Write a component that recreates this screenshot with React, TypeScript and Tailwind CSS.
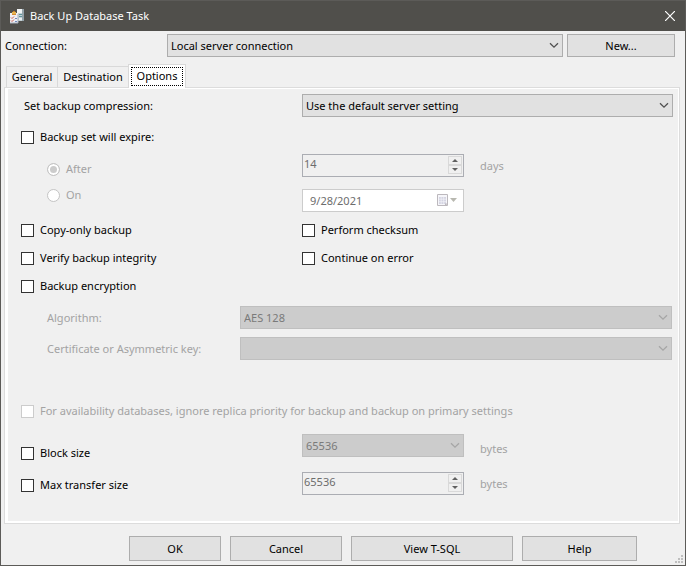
import { useId, type ReactNode } from 'react';

function Chevron({ className }: { className: string }) {
  return (
    <svg
      className={`pointer-events-none absolute right-1 top-2 ${className}`}
      width="10"
      height="7"
      viewBox="0 0 10 7"
      fill="none"
      stroke="currentColor"
      strokeWidth="1.3"
    >
      <path d="M1 1.2 5 5.2 9 1.2" />
    </svg>
  );
}

type ComboProps = { id?: string; label?: string; value: string; disabled?: boolean; className: string };

function Combo({ id, label, value, disabled, className }: ComboProps) {
  return (
    <div className={`relative h-[23px] ${className}`}>
      <select
        id={id}
        aria-label={label}
        disabled={disabled}
        className="block h-full w-full appearance-none border border-[#adadad] bg-[#e1e1e1] px-[3px] text-black opacity-100 disabled:border-[#bfbfbf] disabled:bg-[#cccccc] disabled:text-[#7a7a7a]"
      >
        <option>{value}</option>
      </select>
      <Chevron className={disabled ? 'text-[#a6a6a6]' : 'text-[#505050]'} />
    </div>
  );
}

function Spinner({ label, value }: { label: string; value: string }) {
  return (
    <div className="flex h-[23px] w-[162px] border border-[#abadb3] p-px">
      <input
        aria-label={label}
        disabled
        defaultValue={value}
        className="h-4 min-w-0 flex-1 bg-transparent text-[#6d6d6d]"
      />
      <div className="flex w-[14px] flex-col">
        {['Increase', 'Decrease'].map((name) => (
          <button
            key={name}
            type="button"
            disabled
            aria-label={name}
            className="flex h-[9px] w-[14px] items-center justify-center border border-[#d9d9d9] bg-[#f0f0f0]"
          >
            <svg width="6" height="3" viewBox="0 0 6 3" fill="#606060">
              <path d={name === 'Increase' ? 'M0 3 3 0 6 3z' : 'M0 0 3 3 6 0z'} />
            </svg>
          </button>
        ))}
      </div>
    </div>
  );
}

function Check({ children, disabled, className }: { children: ReactNode; disabled?: boolean; className: string }) {
  return (
    <label className={`flex items-center gap-1.5 ${disabled ? 'text-[#a3a3a3]' : ''} ${className}`}>
      <input
        type="checkbox"
        disabled={disabled}
        className="size-[13px] shrink-0 appearance-none border border-[#333333] bg-white checked:bg-[#333333] disabled:border-[#cccccc]"
      />
      {children}
    </label>
  );
}

function Radio({ children, checked }: { children: ReactNode; checked?: boolean }) {
  return (
    <label className="flex h-[26px] items-center gap-1.5">
      <input
        type="radio"
        name="expiry"
        disabled
        defaultChecked={checked}
        className="size-[13px] shrink-0 appearance-none rounded-full border border-[#c4c4c4] bg-white checked:bg-[#cccccc] checked:shadow-[inset_0_0_0_2px_#ffffff]"
      />
      {children}
    </label>
  );
}

function PushButton({ children, className }: { children: ReactNode; className: string }) {
  return (
    <button type="button" className={`border border-[#adadad] bg-[#e1e1e1] ${className}`}>
      {children}
    </button>
  );
}

function TaskIcon() {
  return (
    <svg width="16" height="16" viewBox="0 0 16 16">
      <path d="M8 1h5v4H8z" fill="#f1f4f5" />
      <path d="M8 5h5v8H8z" fill="#c4d0d4" />
      <path d="M13 1h2v12h-2z" fill="#93a1a8" />
      <path d="M10 6.500h3M10 8.500h3" stroke="#5f959d" />
      <path d="M10 10h3v2h-3z" fill="#e9eef0" />
      <path d="M1 5h8v10H1z" fill="#eef0f4" />
      <path d="M9 6v9H1" fill="none" stroke="#a9b1bf" />
      <path d="M3 4h4v2H3z" fill="#e6b450" />
      <path d="M4 3h2v1H4z" fill="#c9822a" />
      <path d="M3 6.500h4" stroke="#d48a34" />
      <path d="m2 9.500 1 1 2-2M2 12.500l1 1 2-2" fill="none" stroke="#cc5a4e" />
      <path d="M6 10.500h2M6 13.500h2" stroke="#6f86bb" />
    </svg>
  );
}

export default function App() {
  const id = useId();
  return (
    <div className="relative min-h-screen border border-[#5c5b58] bg-[#f0f0f0] pb-[3px] font-['Noto_Sans','Open_Sans',sans-serif] text-[11px] leading-4 text-black">
      <header className="flex h-[30px] items-center bg-[#504f4b] pl-2 pr-[9px] text-white">
        <TaskIcon />
        <h1 className="flex-1 pl-[5px]">Back Up Database Task</h1>
        <button type="button" aria-label="Close" className="p-px">
          <svg width="10" height="10" viewBox="0 0 10 10" stroke="currentColor" strokeWidth="1.2">
            <path d="m0 0 10 10M10 0 0 10" />
          </svg>
        </button>
      </header>

      <div className="flex items-center pl-1 pr-[10px] pt-[3px]">
        <label htmlFor={`${id}c`} className="w-[162px]">
          Connection:
        </label>
        <Combo id={`${id}c`} value="Local server connection" className="flex-1" />
        <PushButton className="ml-1 h-[23px] w-[108px]">New...</PushButton>
      </div>

      <div role="tablist" className="mt-[7px] flex items-end pl-[5px]">
        <button
          type="button"
          role="tab"
          className="h-[21px] w-[52px] border border-b-0 border-[#d9d9d9]"
        >
          General
        </button>
        <button type="button" role="tab" className="h-[21px] w-[70px] border-t border-[#d9d9d9]">
          Destination
        </button>
        <button
          type="button"
          role="tab"
          aria-selected="true"
          className="relative -mb-px h-[24px] w-[58px] border border-b-0 border-[#d9d9d9] bg-white p-[2px]"
        >
          <span className="block h-[19px] border border-dotted border-black leading-4">Options</span>
        </button>
      </div>

      <main className="ml-[3px] mr-[5px] border border-[#dcdcdc] bg-white pb-[2px] pl-[3px] pr-px pt-px">
        <div className="bg-[#f0f0f0] pb-5 pl-[13px] pr-[5px] pt-[5px]">
          <div className="flex items-center">
            <label htmlFor={`${id}b`} className="w-[281px] pl-[3px]">
              Set backup compression:
            </label>
            <Combo id={`${id}b`} value="Use the default server setting" className="flex-1" />
          </div>

          <Check className="mt-[10px] h-5">Backup set will expire:</Check>

          <div className="mt-[7px] flex text-[#a3a3a3]">
            <div className="w-[281px] pl-[26px] pt-[2px]">
              <Radio checked>After</Radio>
              <Radio>On</Radio>
            </div>
            <div className="flex flex-col gap-3">
              <div className="flex items-center gap-4">
                <Spinner label="Days until expiry" value="14" />
                <span>days</span>
              </div>
              <div className="flex h-[23px] w-[162px] items-center border border-[#cccccc] bg-white pl-[7px] pr-[5px]">
                <input
                  aria-label="Expiry date"
                  disabled
                  defaultValue="9/28/2021"
                  className="min-w-0 flex-1 text-[#6d6d6d]"
                />
                <svg width="22" height="13" viewBox="0 0 22 13">
                  <path d="M1.500.5h10v11h-10z" fill="#f6f6fa" stroke="#bcb8bd" />
                  <path d="M3 3h7v7H3z" fill="#d4d4e2" />
                  <path d="M3 5.200h7M3 7.700h7M5.200 3v7M7.700 3v7" stroke="#f6f6fa" strokeWidth=".6" />
                  <path d="M9 12V9.500h3z" fill="#bcb8bd" />
                  <path d="M14 4h7l-3.500 4z" fill="#b8b8b0" />
                </svg>
              </div>
            </div>
          </div>

          <div className="mt-1 grid grid-cols-[281px_1fr]">
            <Check className="h-7">Copy-only backup</Check>
            <Check className="h-7">Perform checksum</Check>
            <Check className="h-7">Verify backup integrity</Check>
            <Check className="h-7">Continue on error</Check>
            <Check className="h-7">Backup encryption</Check>
          </div>

          <div className="mt-1.5 flex flex-col gap-2 pl-[26px] pr-px text-[#a3a3a3]">
            <div className="flex items-center">
              <label htmlFor={`${id}a`} className="w-[193px]">
                Algorithm:
              </label>
              <Combo id={`${id}a`} value="AES 128" disabled className="flex-1" />
            </div>
            <div className="flex items-center">
              <label htmlFor={`${id}k`} className="w-[193px]">
                Certificate or Asymmetric key:
              </label>
              <Combo id={`${id}k`} value="" disabled className="flex-1" />
            </div>
          </div>

          <Check disabled className="mt-[41px] h-5">
            For availability databases, ignore replica priority for backup and backup on primary settings
          </Check>

          <div className="mt-[13px] flex">
            <div className="w-[281px] pt-[3px]">
              <Check className="h-8">Block size</Check>
              <Check className="h-8">Max transfer size</Check>
            </div>
            <div className="flex flex-col gap-[15px] text-[#a3a3a3]">
              <div className="flex items-end gap-4">
                <Combo label="Block size in bytes" value="65536" disabled className="w-[162px]" />
                <span>bytes</span>
              </div>
              <div className="flex items-center gap-4">
                <Spinner label="Max transfer size in bytes" value="65536" />
                <span>bytes</span>
              </div>
            </div>
          </div>
        </div>
      </main>

      <footer className="mt-3 flex justify-end gap-[9px] pr-12">
        <PushButton className="h-[25px] w-[92px]">OK</PushButton>
        <PushButton className="h-[25px] w-[112px]">Cancel</PushButton>
        <PushButton className="h-[25px] w-[162px]">View T-SQL</PushButton>
        <PushButton className="h-[25px] w-[115px]">Help</PushButton>
      </footer>

      <svg className="absolute bottom-[2px] right-[2px]" width="8" height="8" viewBox="0 0 8 8" fill="#bfbfbf">
        <path d="M6 0h2v2H6zM3 3h2v2H3zM6 3h2v2H6zM0 6h2v2H0zM3 6h2v2H3zM6 6h2v2H6z" />
      </svg>
    </div>
  );
}
